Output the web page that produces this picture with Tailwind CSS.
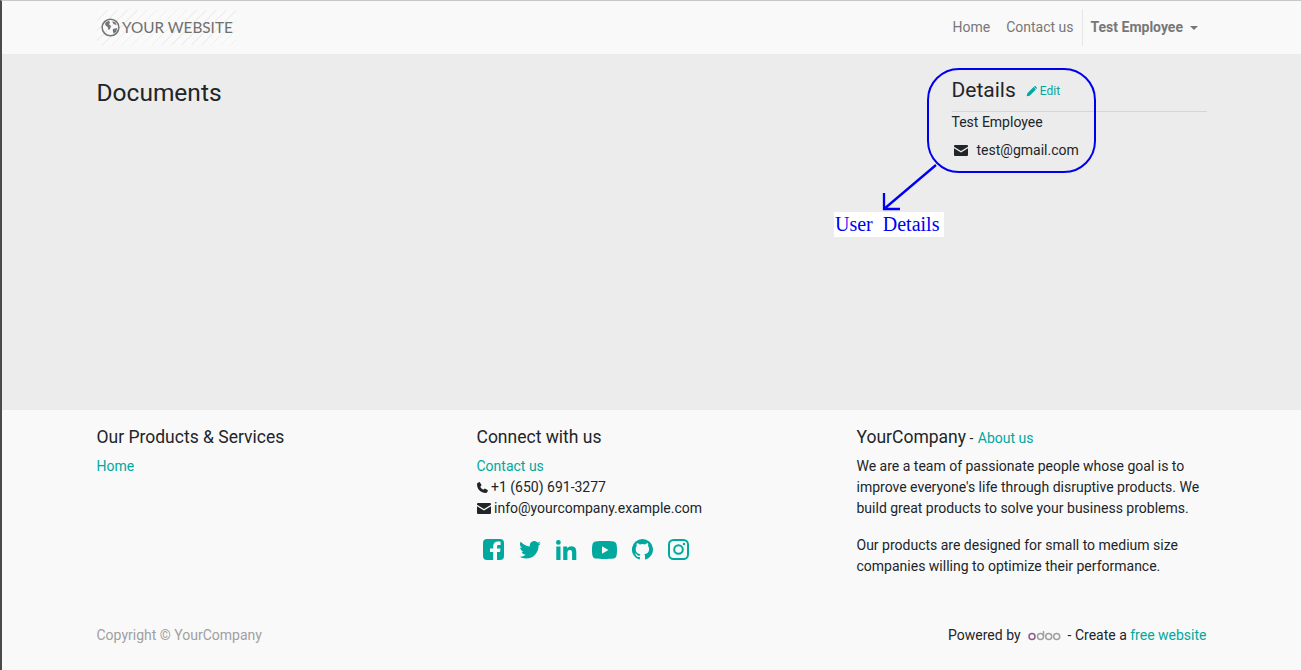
<!DOCTYPE html>
<html lang="en">
  <head>
    <meta charset="UTF-8" />
    <title>Documents</title>
    <script src="https://cdn.jsdelivr.net/npm/@tailwindcss/browser@4"></script>
  </head>
  <body class="h-[670px] w-[1301px] overflow-hidden bg-[#f9f9f9] font-['Roboto',sans-serif] text-[14px] leading-[21px] text-[#212529]">
    <div class="relative flex h-[670px] flex-col border-t border-l-2 border-t-[#c8c8c8] border-l-[#4a4a46]">
      <!-- navbar -->
      <header class="h-[53px] shrink-0 bg-[#f9f9f9]">
        <div class="flex h-full items-center pl-[95px] pr-[95px]">
          <a class="flex h-[35px] w-[139px] items-center bg-[repeating-linear-gradient(135deg,#efefef_0px,#efefef_1px,#fafafa_1px,#fafafa_7px)] pl-1 font-['Lato',sans-serif] text-[15.300px] text-[#6f6f6f]">
            <svg class="mr-0.5 h-[19px] w-[19px] shrink-0" viewBox="0 0 20 20">
              <circle cx="10" cy="10" r="8.800" fill="none" stroke="#757575" stroke-width="1.600" />
              <path d="M4.500 5l3.500-2 1.500 1.500-1 2 2 2-1 3-1.500 1-1-3-2.500-2zM12 3.500l3 1 1.500 3-2.500-1-1.500-1zM12.500 11.500l4.500-1-1 4-2.500 2-1-2.500z" fill="#757575" />
            </svg>
            <span>YOUR WEBSITE</span>
          </a>
          <nav class="ml-auto flex h-[37px] items-center text-[#777777]">
            <a class="px-2">Home</a>
            <a class="px-2">Contact us</a>
            <div class="flex h-full items-center border-l border-[#e6e6e6] pl-2 pr-2 font-bold">
              Test Employee
              <span class="ml-[7px] h-0 w-0 border-x-[4.500px] border-t-[4.500px] border-x-transparent border-t-[#777777]"></span>
            </div>
          </nav>
        </div>
      </header>

      <!-- main -->
      <main class="flex h-[356px] shrink-0 bg-[#ececec] pl-[94.500px] pr-[94px]">
        <h1 class="mt-6 grow text-[24.500px] leading-[29px]">Documents</h1>
        <section class="w-[255.500px] pt-6">
          <div class="flex h-[34px] items-start border-b border-[#d5d5d5]">
            <h2 class="text-[21px] leading-[24px]">Details</h2>
            <a class="ml-[10px] mt-[4px] flex items-center gap-[3px] text-[12px] leading-[18px] text-[#00a8a0]">
              <svg class="h-[11px] w-[11px]" viewBox="0 0 12 12" fill="#00a8a0"><path d="M8.300 1.200 10.800 3.700 4 10.500.7 11.300 1.500 8zM9 .5c.5-.5 1.200-.5 1.700 0l.8.8c.5.5.5 1.200 0 1.700l-.3.3L8.700.8z" /></svg>
              Edit
            </a>
          </div>
          <p class="leading-[21px]">Test Employee</p>
          <div class="mt-[7px] flex items-center pl-[2px]">
            <svg class="h-[11px] w-[14px]" viewBox="0 0 14 11" fill="#212529"><path d="M1 0h12a1 1 0 0 1 1 1v.8L7 6 0 1.800V1a1 1 0 0 1 1-1zM0 3.300l7 4.200 7-4.200V10a1 1 0 0 1-1 1H1a1 1 0 0 1-1-1z" /></svg>
            <span class="ml-[9px]">test@gmail.com</span>
          </div>
        </section>
      </main>

      <!-- footer -->
      <footer class="flex grow flex-col bg-[#f9f9f9] pl-[94.500px] pr-[94.500px]">
        <div class="grid h-[204px] grid-cols-[380px_380px_350px] pt-[17px]">
          <div>
            <h5 class="text-[17.500px] leading-[21px]">Our Products &amp; Services</h5>
            <a class="mt-[8px] block text-[#00a8a0]">Home</a>
          </div>
          <div>
            <h5 class="text-[17.500px] leading-[21px]">Connect with us</h5>
            <a class="mt-[8px] block text-[#00a8a0]">Contact us</a>
            <div class="flex items-center gap-[3.500px]">
              <svg class="h-[11px] w-[11px]" viewBox="0 0 12 12" fill="#212529"><path d="M3 0 5 3.500 3.600 5.200c.8 1.500 1.700 2.400 3.200 3.200L8.500 7 12 9l-.8 2c-.3.6-.9 1-1.600 1C4.300 12 0 7.700 0 2.400c0-.7.4-1.300 1-1.600z" /></svg>
              <span>+1 (650) 691-3277</span>
            </div>
            <div class="flex items-center gap-[3.500px]">
              <svg class="h-[11px] w-[14px]" viewBox="0 0 14 11" fill="#212529"><path d="M1 0h12a1 1 0 0 1 1 1v.8L7 6 0 1.800V1a1 1 0 0 1 1-1zM0 3.300l7 4.200 7-4.200V10a1 1 0 0 1-1 1H1a1 1 0 0 1-1-1z" /></svg>
              <span>info@yourcompany.example.com</span>
            </div>
            <div class="mt-5 flex items-center gap-[15px] pl-[6px]">
              <svg class="h-[21px] w-[21px]" viewBox="0 0 21 21"><path fill="#00a89d" d="M4 0h13a4 4 0 0 1 4 4v13a4 4 0 0 1-4 4h-3v-8h3l.5-3.500H14V7.500c0-1 .4-1.600 1.700-1.600h1.900V2.800c-.8-.1-1.800-.2-2.800-.2-2.800 0-4.600 1.700-4.600 4.600v2.300H7V13h3.200v8H4a4 4 0 0 1-4-4V4a4 4 0 0 1 4-4z" /></svg>
              <svg class="h-[18px] w-[22px]" viewBox="0 0 24 20"><path fill="#00a89d" d="M24 2.400c-.9.400-1.800.7-2.800.8 1-.6 1.800-1.600 2.200-2.700-.9.600-2 1-3.100 1.200A4.900 4.900 0 0 0 11.900 6.100C7.800 5.900 4.200 3.900 1.700.9a4.900 4.900 0 0 0 1.500 6.600c-.8 0-1.600-.2-2.200-.6v.1c0 2.400 1.700 4.400 3.900 4.800-.7.200-1.500.2-2.200.1.600 2 2.400 3.400 4.600 3.400A9.900 9.900 0 0 1 0 17.300 13.900 13.900 0 0 0 7.500 19.500c9.100 0 14-7.500 14-14v-.6c1-.7 1.800-1.600 2.500-2.500z" /></svg>
              <svg class="h-[20px] w-[21px]" viewBox="0 0 21 20"><path fill="#00a89d" d="M.3 6.600h4.200V20H.3zM2.400 0a2.400 2.400 0 1 1 0 4.800 2.400 2.400 0 0 1 0-4.800zM7.200 6.600h4v1.800c.6-1.100 2-2.200 4-2.200 4.300 0 5.100 2.800 5.100 6.400V20h-4.200v-6.500c0-1.600 0-3.600-2.200-3.600s-2.500 1.700-2.500 3.500V20H7.200z" /></svg>
              <svg class="h-[18px] w-[25px]" viewBox="0 0 25 18"><path fill="#00a89d" fill-rule="evenodd" d="M3.500.4C6 0 9.300 0 12.500 0s6.500 0 9 .4c1.500.2 2.600 1.300 3 2.800.3 1.500.5 3.500.5 5.800s-.2 4.300-.5 5.800c-.4 1.500-1.500 2.600-3 2.800-2.500.4-5.800.4-9 .4s-6.500 0-9-.4c-1.500-.2-2.600-1.300-3-2.800C.2 13.300 0 11.300 0 9s.2-4.300.5-5.800C.9 1.700 2 .6 3.500.4zM10 5.200v7.600L16.500 9z" /></svg>
              <svg class="h-[21px] w-[21px]" viewBox="0 0 21 21"><path fill="#00a89d" fill-rule="evenodd" d="M10.500 0a10.500 10.500 0 0 0-3.300 20.500c.5.1.7-.2.700-.5v-2c-2.900.6-3.500-1.300-3.500-1.300-.5-1.200-1.200-1.500-1.200-1.500-1-.7 0-.7 0-.7 1 .1 1.600 1.100 1.600 1.100.9 1.600 2.400 1.100 3 .9.1-.7.4-1.100.7-1.400-2.300-.3-4.800-1.200-4.800-5.200 0-1.100.4-2 1.100-2.800-.1-.3-.5-1.300.1-2.800 0 0 .9-.3 2.900 1.100a10 10 0 0 1 5.200 0c2-1.400 2.900-1.100 2.900-1.100.6 1.500.2 2.500.1 2.800.7.8 1.100 1.700 1.100 2.800 0 4-2.500 4.900-4.800 5.200.4.3.7 1 .7 1.900V20c0 .3.2.6.7.5A10.500 10.500 0 0 0 10.500 0z" /></svg>
              <svg class="h-[21px] w-[21px]" viewBox="0 0 21 21" fill="none" stroke="#00a89d" stroke-width="2"><rect x="1" y="1" width="19" height="19" rx="4.500" /><circle cx="10.500" cy="10.500" r="4.300" /><circle cx="16" cy="5" r="1.200" fill="#00a89d" stroke="none" /></svg>
            </div>
          </div>
          <div>
            <p class="leading-[21px]"><span class="text-[17.500px]">YourCompany</span> - <a class="ml-[1px] text-[#00a8a0]">About us</a></p>
            <p class="mt-[7px]">We are a team of passionate people whose goal is to improve everyone's life through disruptive products. We build great products to solve your business problems.</p>
            <p class="mt-4">Our products are designed for small to medium size companies willing to optimize their performance.</p>
          </div>
        </div>
        <div class="flex items-center justify-between pt-[11px]">
          <span class="text-[#a0a0a0]">Copyright © YourCompany</span>
          <span class="flex items-center">
            Powered by
            <svg class="mx-[7px] h-[10px] w-[33px]" viewBox="0 0 33 10" fill="none" stroke-width="1.500">
              <circle cx="4" cy="5.500" r="3" stroke="#8f5a85" />
              <circle cx="12.500" cy="5.500" r="3" stroke="#a0a0a0" />
              <path d="M15.500 0v5.500" stroke="#a0a0a0" />
              <circle cx="20.700" cy="5.500" r="3" stroke="#a0a0a0" />
              <circle cx="28.700" cy="5.500" r="3" stroke="#a0a0a0" />
            </svg>
            - Create a&nbsp;<a class="text-[#00a8a0]">free website</a>
          </span>
        </div>
      </footer>

      <!-- annotation drawn over the screenshot -->
      <div class="absolute left-[925px] top-[67px] h-[105px] w-[169px] rounded-[32px] border-2 border-[#0000f0]"></div>
      <svg class="absolute left-[870px] top-[155px] h-[60px] w-[80px]" viewBox="0 0 80 60" fill="none" stroke="#0000f0" stroke-width="2.300">
        <path d="M64 9 12 53M12 37v16h16" />
      </svg>
      <div class="absolute left-[832px] top-[211px] h-[25px] w-[110px] bg-white pl-[1px] font-['Liberation_Serif',serif] text-[20px] leading-[24px] whitespace-pre text-[#0000f0]">User  Details</div>
    </div>
  </body>
</html>
